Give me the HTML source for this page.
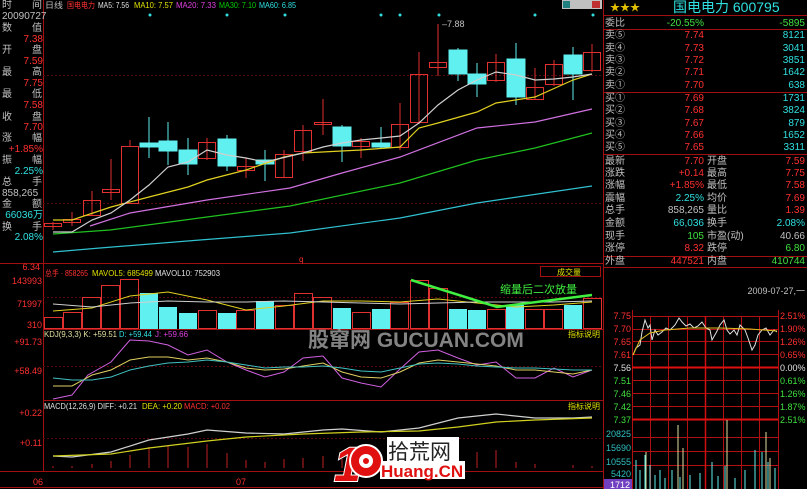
<!DOCTYPE html>
<html><head><meta charset="utf-8"><style>
html,body{margin:0;padding:0;background:#000;overflow:hidden}
svg{display:block}
text{font-family:"Liberation Sans","Noto Sans CJK SC",sans-serif}
</style></head><body>
<svg width="807" height="489" viewBox="0 0 807 489" xmlns="http://www.w3.org/2000/svg">
<rect width="807" height="489" fill="#000"/>
<g stroke="#a01010" stroke-width="1" fill="none">
<line x1="43.5" y1="0" x2="43.5" y2="472"/>
<line x1="603.5" y1="0" x2="603.5" y2="489"/>
<line x1="0" y1="263.5" x2="603" y2="263.5"/>
<line x1="43" y1="329.5" x2="603" y2="329.5"/>
<line x1="43" y1="400.5" x2="603" y2="400.5"/>
<line x1="0" y1="471.5" x2="603" y2="471.5"/>
<line x1="0" y1="487.5" x2="603" y2="487.5"/>
<line x1="603" y1="29.5" x2="807" y2="29.5"/>
<line x1="603" y1="92.5" x2="807" y2="92.5"/>
<line x1="603" y1="154.5" x2="807" y2="154.5"/>
<line x1="603" y1="256.5" x2="807" y2="256.5"/>
<line x1="603" y1="267.5" x2="807" y2="267.5"/>
<line x1="603" y1="15.5" x2="807" y2="15.5"/>
</g>
<g stroke="#5a0808" stroke-dasharray="2,2">
<line x1="43" y1="75.5" x2="603" y2="75.5"/>
<line x1="43" y1="203.5" x2="603" y2="203.5"/>
<line x1="43" y1="297.5" x2="603" y2="297.5"/>
<line x1="43" y1="366.5" x2="603" y2="366.5"/>
<line x1="43" y1="438.5" x2="603" y2="438.5"/>
</g>
<g font-size="10" fill="#c0c0c0">
<text x="2" y="8">时</text><text x="32" y="8">间</text>
<text x="2" y="19">20090727</text>
<text x="2" y="31">数</text><text x="32" y="31">值</text>
<text x="2" y="53">开</text><text x="32" y="53">盘</text>
<text x="2" y="75">最</text><text x="32" y="75">高</text>
<text x="2" y="97">最</text><text x="32" y="97">低</text>
<text x="2" y="120">收</text><text x="32" y="120">盘</text>
<text x="2" y="141">涨</text><text x="32" y="141">幅</text>
<text x="2" y="163">振</text><text x="32" y="163">幅</text>
<text x="2" y="185">总</text><text x="32" y="185">手</text>
<text x="2" y="196">858,265</text>
<text x="2" y="207">金</text><text x="32" y="207">额</text>
<text x="2" y="230">换</text><text x="32" y="230">手</text>
</g>
<g font-size="10" text-anchor="end">
<text x="43" y="42" fill="#ff3030">7.38</text>
<text x="43" y="64" fill="#ff3030">7.59</text>
<text x="43" y="86" fill="#ff3030">7.75</text>
<text x="43" y="108" fill="#ff3030">7.58</text>
<text x="43" y="130" fill="#ff3030">7.70</text>
<text x="43" y="152" fill="#ff3030">+1.85%</text>
<text x="43" y="174" fill="#30e0e0">2.25%</text>
<text x="43" y="218" fill="#30e0e0">66036万</text>
<text x="43" y="240" fill="#30e0e0">2.08%</text>
<text x="40" y="270" fill="#ff3030" font-size="9">6.34</text>
<text x="42" y="284" fill="#ff3030" font-size="9">143993</text>
<text x="42" y="307" fill="#ff3030" font-size="9">71997</text>
<text x="42" y="328" fill="#ff3030" font-size="9">310</text>
<text x="42" y="345" fill="#ff3030" font-size="9">+91.73</text>
<text x="42" y="374" fill="#ff3030" font-size="9">+58.49</text>
<text x="42" y="416" fill="#ff3030" font-size="9">+0.22</text>
<text x="42" y="446" fill="#ff3030" font-size="9">+0.11</text>
</g>
<text x="33" y="485" fill="#ff3030" font-size="9">06</text>
<text x="236" y="485" fill="#ff3030" font-size="9">07</text>
<g font-size="8">
<text x="45" y="8" fill="#c0c0c0" textLength="18" lengthAdjust="spacingAndGlyphs">日线</text>
<text x="67" y="8" fill="#ff3030" textLength="28" lengthAdjust="spacingAndGlyphs">国电电力</text>
<text x="98" y="8" fill="#e0e0e0" textLength="31" lengthAdjust="spacingAndGlyphs">MA5: 7.56</text>
<text x="134" y="8" fill="#e0e000" textLength="39" lengthAdjust="spacingAndGlyphs">MA10: 7.57</text>
<text x="176" y="8" fill="#e040e0" textLength="40" lengthAdjust="spacingAndGlyphs">MA20: 7.33</text>
<text x="219" y="8" fill="#00d000" textLength="37" lengthAdjust="spacingAndGlyphs">MA30: 7.10</text>
<text x="259" y="8" fill="#30e0e0" textLength="37" lengthAdjust="spacingAndGlyphs">MA60: 6.85</text>
</g>
<g fill="#30e0e0">
<circle cx="150" cy="15" r="1.5"/><circle cx="227" cy="15" r="1.5"/><circle cx="285" cy="15" r="1.5"/><circle cx="381" cy="15" r="1.5"/><circle cx="400" cy="15" r="1.5"/><circle cx="439" cy="15" r="1.5"/><circle cx="535" cy="15" r="1.5"/><circle cx="593" cy="15" r="1.5"/>
</g>
<rect x="562" y="0" width="40" height="9" fill="#c0c0c0"/>
<rect x="563" y="1" width="7" height="7" fill="#208080"/>
<rect x="592" y="1" width="8" height="7" fill="#c03030"/>
<text x="442" y="27" fill="#c0c0c0" font-size="9">–7.88</text>
<g stroke="#e03030" stroke-width="1" fill="none">
<line x1="53" y1="222" x2="53" y2="230"/><rect x="44.5" y="223.5" width="17" height="3"/>
<line x1="72" y1="212" x2="72" y2="226"/><rect x="63.5" y="219.5" width="17" height="3"/>
<line x1="92" y1="191" x2="92" y2="215"/><rect x="83.5" y="200.5" width="17" height="15"/>
<line x1="111" y1="159" x2="111" y2="200"/><rect x="102.5" y="189.5" width="17" height="3"/>
<line x1="130" y1="140" x2="130" y2="146"/><rect x="121.5" y="146.5" width="17" height="57"/>
<line x1="207" y1="138" x2="207" y2="160"/><rect x="198.5" y="142.5" width="17" height="16"/>
<line x1="246" y1="158" x2="246" y2="178"/><rect x="237.5" y="166.5" width="17" height="4"/>
<line x1="284" y1="150" x2="284" y2="178"/><rect x="275.5" y="154.5" width="17" height="23"/>
<line x1="303" y1="125" x2="303" y2="161"/><rect x="294.5" y="130.5" width="17" height="21"/>
<line x1="323" y1="99" x2="323" y2="135"/><rect x="314.5" y="122.5" width="17" height="2"/>
<line x1="361" y1="138" x2="361" y2="158"/><rect x="352.5" y="141.5" width="17" height="5"/>
<line x1="400" y1="103" x2="400" y2="150"/><rect x="391.5" y="124.5" width="17" height="23"/>
<line x1="419" y1="52" x2="419" y2="124"/><rect x="410.5" y="74.5" width="17" height="48"/>
<line x1="438" y1="24" x2="438" y2="76"/><rect x="429.5" y="62.5" width="17" height="5"/>
<line x1="496" y1="54" x2="496" y2="82"/><rect x="487.5" y="62.5" width="17" height="18"/>
<line x1="535" y1="68" x2="535" y2="99"/><rect x="526.5" y="87.5" width="17" height="12"/>
<line x1="554" y1="60" x2="554" y2="86"/><rect x="545.5" y="64.5" width="17" height="20"/>
<line x1="592" y1="44" x2="592" y2="72"/><rect x="583.5" y="52.5" width="17" height="18"/>
</g>
<g stroke="#60f0f0" stroke-width="1" fill="#60f0f0">
<line x1="149" y1="117" x2="149" y2="158"/><rect x="140" y="143" width="18" height="4"/>
<line x1="168" y1="122" x2="168" y2="165"/><rect x="159" y="141" width="18" height="10"/>
<line x1="188" y1="138" x2="188" y2="175"/><rect x="179" y="150" width="18" height="14"/>
<line x1="227" y1="135" x2="227" y2="171"/><rect x="218" y="139" width="18" height="27"/>
<line x1="265" y1="150" x2="265" y2="181"/><rect x="256" y="160" width="18" height="4"/>
<line x1="342" y1="125" x2="342" y2="162"/><rect x="333" y="127" width="18" height="19"/>
<line x1="381" y1="127" x2="381" y2="148"/><rect x="372" y="143" width="18" height="4"/>
<line x1="458" y1="48" x2="458" y2="81"/><rect x="449" y="50" width="18" height="24"/>
<line x1="477" y1="63" x2="477" y2="97"/><rect x="468" y="74" width="18" height="10"/>
<line x1="516" y1="43" x2="516" y2="105"/><rect x="507" y="59" width="18" height="38"/>
<line x1="573" y1="47" x2="573" y2="100"/><rect x="564" y="55" width="18" height="19"/>
</g>
<g fill="none" stroke-width="1.2">
<polyline stroke="#30c0d0" points="53,252 100,248 200,240 290,233 400,218 477,203 592,186"/>
<polyline stroke="#20c020" points="53,234 110,230 207,217 290,206 400,183 477,160 535,148 592,133"/>
<polyline stroke="#d070e0" points="90,226 130,213 207,200 290,188 342,173 400,157 477,128 535,122 592,109"/>
<polyline stroke="#e0d020" points="53,220 72,220 111,207 149,197 188,187 207,180 246,170 284,157 303,153 361,150 400,147 419,128 438,123 477,112 496,103 535,97 573,80 592,74"/>
<polyline stroke="#d0d0d0" points="53,232 72,232 92,220 111,213 130,200 149,185 168,167 188,162 207,150 227,155 246,158 265,162 303,153 323,147 342,143 361,140 381,138 400,136 419,123 438,105 458,90 477,80 496,72 516,75 535,80 554,79 573,77 592,74"/>
</g>
<text x="299" y="262" fill="#ff3030" font-size="8">q</text>
<g font-size="8">
<text x="45" y="276" fill="#ff3030" textLength="43" lengthAdjust="spacingAndGlyphs">总手 · 858265</text>
<text x="92" y="276" fill="#e0e000" textLength="61" lengthAdjust="spacingAndGlyphs">MAVOL5: 685499</text>
<text x="155" y="276" fill="#e0e0e0" textLength="65" lengthAdjust="spacingAndGlyphs">MAVOL10: 752903</text>
</g>
<rect x="540.5" y="266.5" width="60" height="10" fill="none" stroke="#a01010"/>
<text x="557" y="275" fill="#e0e000" font-size="8">成交量</text>
<g stroke="#e03030" fill="none">
<rect x="44.5" y="317.5" width="18" height="11"/><rect x="63.5" y="312.5" width="18" height="16"/>
<rect x="82.5" y="297.5" width="18" height="31"/><rect x="101.5" y="285.5" width="18" height="43"/>
<rect x="120.5" y="279.5" width="18" height="49"/><rect x="198.5" y="310.5" width="18" height="18"/>
<rect x="236.5" y="310.5" width="18" height="18"/><rect x="275.5" y="305.5" width="18" height="23"/>
<rect x="294.5" y="293.5" width="18" height="35"/><rect x="313.5" y="297.5" width="18" height="31"/>
<rect x="352.5" y="312.5" width="18" height="16"/><rect x="390.5" y="302.5" width="18" height="26"/>
<rect x="410.5" y="280.5" width="18" height="48"/><rect x="429.5" y="288.5" width="18" height="40"/>
<rect x="487.5" y="309.5" width="18" height="19"/><rect x="525.5" y="309.5" width="18" height="19"/>
<rect x="544.5" y="309.5" width="18" height="19"/><rect x="583.5" y="298.5" width="18" height="30"/>
</g>
<g fill="#60f0f0">
<rect x="140" y="293" width="18" height="36"/><rect x="159" y="307" width="18" height="22"/>
<rect x="179" y="313" width="18" height="16"/><rect x="218" y="313" width="18" height="16"/>
<rect x="256" y="301" width="18" height="28"/><rect x="333" y="308" width="18" height="21"/>
<rect x="372" y="309" width="18" height="20"/><rect x="449" y="309" width="18" height="20"/>
<rect x="468" y="310" width="18" height="19"/><rect x="506" y="305" width="18" height="24"/>
<rect x="564" y="305" width="18" height="24"/>
</g>
<g fill="none" stroke-width="1">
<polyline stroke="#e0d020" points="53,311 92,308 130,296 168,292 207,300 246,310 284,306 323,301 361,301 400,302 438,299 477,303 516,307 554,305 592,302"/>
<polyline stroke="#d0d0d0" points="53,304 92,307 130,303 168,301 207,302 246,302 284,301 323,302 361,303 400,304 438,303 477,302 516,302 554,302 592,301"/>
</g>
<polyline fill="none" stroke="#40f040" stroke-width="2.5" points="411,280 497,307 592,295"/>
<text x="500" y="293" fill="#40f040" font-size="11">缩量后二次放量</text>
<g font-size="8">
<text x="44" y="337" fill="#e0e0a0" textLength="73" lengthAdjust="spacingAndGlyphs">KDJ(9,3,3) K: +59.51</text>
<text x="119" y="337" fill="#30e0e0" textLength="33" lengthAdjust="spacingAndGlyphs">D: +59.44</text>
<text x="155" y="337" fill="#e040e0" textLength="33" lengthAdjust="spacingAndGlyphs">J: +59.66</text>
</g>
<text x="568" y="337" fill="#e0e000" font-size="8">指标说明</text>
<g fill="none" stroke-width="1">
<polyline stroke="#d060e0" points="53,399 72,395 88,375 111,362 130,340 149,341 168,345 188,355 207,350 227,362 246,370 265,377 284,372 303,358 323,356 342,378 361,383 381,387 400,369 410,360 419,352 438,350 458,358 477,365 496,362 516,378 535,378 554,368 573,377 592,370"/>
<polyline stroke="#e0d060" points="53,386 72,386 92,375 111,370 130,360 149,357 168,357 188,360 207,358 227,362 246,368 265,370 284,369 303,366 323,363 342,372 361,377 381,378 400,372 419,363 438,360 458,362 477,364 496,366 516,370 535,370 554,372 573,374 592,370"/>
<polyline stroke="#40c0c0" points="53,378 72,380 92,380 111,377 130,370 149,366 168,363 188,362 207,360 227,362 246,365 265,368 284,367 303,367 323,366 342,368 361,371 381,372 400,368 419,364 438,363 458,364 477,366 496,367 516,368 535,368 554,369 573,370 592,370"/>
</g>
<g font-size="8">
<text x="44" y="409" fill="#e0e0e0" textLength="93" lengthAdjust="spacingAndGlyphs">MACD(12,26,9) DIFF: +0.21</text>
<text x="142" y="409" fill="#e0e000" textLength="40" lengthAdjust="spacingAndGlyphs">DEA: +0.20</text>
<text x="184" y="409" fill="#ff3030" textLength="46" lengthAdjust="spacingAndGlyphs">MACD: +0.02</text>
</g>
<text x="568" y="409" fill="#e0e000" font-size="8">指标说明</text>
<g stroke="#c02020">
<line x1="53" y1="468" x2="53" y2="466"/><line x1="72" y1="468" x2="72" y2="466"/><line x1="92" y1="468" x2="92" y2="464"/><line x1="111" y1="468" x2="111" y2="461"/><line x1="130" y1="468" x2="130" y2="455"/><line x1="149" y1="468" x2="149" y2="447"/><line x1="168" y1="468" x2="168" y2="446"/><line x1="188" y1="468" x2="188" y2="447"/><line x1="207" y1="468" x2="207" y2="444"/><line x1="227" y1="468" x2="227" y2="453"/><line x1="246" y1="468" x2="246" y2="460"/><line x1="265" y1="468" x2="265" y2="462"/><line x1="284" y1="468" x2="284" y2="459"/><line x1="303" y1="468" x2="303" y2="458"/><line x1="323" y1="468" x2="323" y2="456"/><line x1="342" y1="468" x2="342" y2="459"/><line x1="361" y1="468" x2="361" y2="462"/><line x1="381" y1="468" x2="381" y2="463"/><line x1="400" y1="468" x2="400" y2="460"/><line x1="477" y1="468" x2="477" y2="452"/><line x1="496" y1="468" x2="496" y2="450"/><line x1="516" y1="468" x2="516" y2="462"/><line x1="535" y1="468" x2="535" y2="464"/><line x1="573" y1="468" x2="573" y2="465"/><line x1="592" y1="468" x2="592" y2="466"/>
</g>
<g fill="none" stroke-width="1.2">
<polyline stroke="#d0d0d0" points="53,456 72,457 111,452 149,440 188,434 207,430 246,433 284,434 323,430 342,429 381,432 419,428 458,418 496,414 535,418 573,418 592,417"/>
<polyline stroke="#d0d020" points="53,456 111,454 149,448 207,441 246,437 303,434 361,432 419,431 458,427 496,422 535,420 592,418"/>
</g>
<text x="308" y="347" fill="#9a9a9a" font-size="21" font-weight="bold" opacity="0.85">股窜网 GUCUAN.COM</text>
<!-- logo -->
<rect x="387" y="437" width="72" height="24" fill="#fff"/>
<rect x="380" y="461" width="85" height="18" fill="#fff"/>
<text x="334" y="481" fill="#e01010" stroke="#fff" stroke-width="2" paint-order="stroke" font-size="48" font-weight="bold" font-style="italic">1</text>
<circle cx="366" cy="461" r="16" fill="#e01010" stroke="#fff" stroke-width="2"/>
<circle cx="366" cy="461" r="7" fill="#fff"/><circle cx="366" cy="461" r="3" fill="#e01010"/>
<text x="388" y="459" fill="#222" font-size="21">拾荒网</text>
<text x="381" y="477" fill="#e01010" font-size="17" font-weight="bold">Huang.CN</text>
<!-- right panel -->
<text x="610" y="11" fill="#e0c000" font-size="10">★★★</text>
<text x="673" y="12" fill="#30e0e0" font-size="14">国电电力 600795</text>
<g font-size="10" fill="#c0c0c0">
<text x="605" y="26">委比</text>
<text x="605" y="38">卖⑤</text><text x="605" y="51">卖④</text><text x="605" y="63">卖③</text><text x="605" y="75">卖②</text><text x="605" y="88">卖①</text>
<text x="605" y="101">买①</text><text x="605" y="113">买②</text><text x="605" y="126">买③</text><text x="605" y="138">买④</text><text x="605" y="150">买⑤</text>
<text x="605" y="164">最新</text><text x="605" y="176">涨跌</text><text x="605" y="188">涨幅</text><text x="605" y="201">震幅</text><text x="605" y="213">总手</text><text x="605" y="226">金额</text><text x="605" y="239">现手</text><text x="605" y="251">涨停</text><text x="605" y="264">外盘</text>
<text x="707" y="164">开盘</text><text x="707" y="176">最高</text><text x="707" y="188">最低</text><text x="707" y="201">均价</text><text x="707" y="213">量比</text><text x="707" y="226">换手</text><text x="707" y="239">市盈(动)</text><text x="707" y="251">跌停</text><text x="707" y="264">内盘</text>
</g>
<g font-size="10" text-anchor="end">
<text x="704" y="26" fill="#40e040">-20.55%</text><text x="805" y="26" fill="#40e040">-5895</text>
<g fill="#ff3030"><text x="704" y="38">7.74</text><text x="704" y="51">7.73</text><text x="704" y="63">7.72</text><text x="704" y="75">7.71</text><text x="704" y="88">7.70</text><text x="704" y="101">7.69</text><text x="704" y="113">7.68</text><text x="704" y="126">7.67</text><text x="704" y="138">7.66</text><text x="704" y="150">7.65</text>
<text x="704" y="164">7.70</text><text x="704" y="176">+0.14</text><text x="704" y="188">+1.85%</text><text x="704" y="251">8.32</text><text x="704" y="264">447521</text>
<text x="805" y="164">7.59</text><text x="805" y="176">7.75</text><text x="805" y="188">7.58</text><text x="805" y="201">7.69</text><text x="805" y="213">1.39</text></g>
<g fill="#30e0e0"><text x="805" y="38">8121</text><text x="805" y="51">3041</text><text x="805" y="63">3851</text><text x="805" y="75">1642</text><text x="805" y="88">638</text><text x="805" y="101">1731</text><text x="805" y="113">3824</text><text x="805" y="126">879</text><text x="805" y="138">1652</text><text x="805" y="150">3311</text>
<text x="704" y="201">2.25%</text><text x="704" y="226">66,036</text><text x="805" y="226">2.08%</text></g>
<text x="704" y="213" fill="#c0c0c0">858,265</text>
<text x="704" y="239" fill="#40e040">105</text>
<text x="805" y="239" fill="#c0c0c0">40.66</text>
<text x="805" y="251" fill="#40e040">6.80</text>
<text x="805" y="264" fill="#40e040">410744</text>
</g>
<text x="805" y="294" fill="#c0c0c0" font-size="9" text-anchor="end">2009-07-27,一</text>
<g stroke="#b01010" stroke-width="1">
<line x1="632" y1="316.5" x2="778" y2="316.5"/><line x1="632" y1="329.5" x2="778" y2="329.5"/><line x1="632" y1="341.5" x2="778" y2="341.5"/><line x1="632" y1="354.5" x2="778" y2="354.5"/>
<line x1="632" y1="380.5" x2="778" y2="380.5"/><line x1="632" y1="393.5" x2="778" y2="393.5"/><line x1="632" y1="406.5" x2="778" y2="406.5"/>
<line x1="632" y1="437.5" x2="778" y2="437.5"/><line x1="632" y1="451.5" x2="778" y2="451.5"/><line x1="632" y1="465.5" x2="778" y2="465.5"/>
<line x1="632.5" y1="310" x2="632.5" y2="489"/><line x1="778.5" y1="310" x2="778.5" y2="489"/>
<line x1="650.5" y1="316" x2="650.5" y2="489"/><line x1="668.5" y1="316" x2="668.5" y2="489"/><line x1="687.5" y1="316" x2="687.5" y2="489"/><line x1="723.5" y1="316" x2="723.5" y2="489"/><line x1="741.5" y1="316" x2="741.5" y2="489"/><line x1="759.5" y1="316" x2="759.5" y2="489"/>
</g>
<line x1="705.5" y1="316" x2="705.5" y2="489" stroke="#d01010" stroke-width="1.5"/>
<line x1="632" y1="367.5" x2="778" y2="367.5" stroke="#e01010" stroke-width="2"/>
<line x1="632" y1="419.5" x2="778" y2="419.5" stroke="#e01010" stroke-width="2"/>
<g font-size="9" text-anchor="end">
<text x="631" y="319" fill="#ff3030">7.75</text><text x="631" y="332" fill="#ff3030">7.70</text><text x="631" y="345" fill="#ff3030">7.65</text><text x="631" y="358" fill="#ff3030">7.61</text>
<text x="631" y="371" fill="#e0e0e0">7.56</text>
<text x="631" y="384" fill="#40e040">7.51</text><text x="631" y="397" fill="#40e040">7.46</text><text x="631" y="410" fill="#40e040">7.42</text><text x="631" y="423" fill="#40e040">7.37</text>
<text x="631" y="437" fill="#30c0c0">20825</text><text x="631" y="451" fill="#30c0c0">15690</text><text x="631" y="465" fill="#30c0c0">10555</text><text x="631" y="477" fill="#30c0c0">5420</text>
</g>
<rect x="604" y="479" width="28" height="10" fill="#7040c0"/>
<text x="610" y="488" fill="#fff" font-size="9">1712</text>
<g font-size="9">
<text x="780" y="319" fill="#ff3030">2.51%</text><text x="780" y="332" fill="#ff3030">1.90%</text><text x="780" y="345" fill="#ff3030">1.26%</text><text x="780" y="358" fill="#ff3030">0.65%</text>
<text x="780" y="371" fill="#e0e0e0">0.00%</text>
<text x="780" y="384" fill="#40e040">0.61%</text><text x="780" y="397" fill="#40e040">1.26%</text><text x="780" y="410" fill="#40e040">1.87%</text><text x="780" y="423" fill="#40e040">2.51%</text>
</g>
<polyline fill="none" stroke="#e0e0e0" stroke-width="1" points="633,355 636,348 640,345 642,332 645,320 648,328 650,325 652,340 655,330 658,335 662,332 666,328 670,330 675,325 679,318 682,322 686,326 690,324 694,328 698,326 702,322 706,328 710,330 712,340 716,333 720,325 724,320 727,330 730,334 734,330 737,335 740,325 745,330 748,338 752,350 755,345 758,335 762,330 766,328 770,335 774,330 777,332"/>
<polyline fill="none" stroke="#e0c020" stroke-width="1" points="633,355 640,340 650,333 665,330 690,328 720,328 750,329 777,331"/>
<g stroke="#60f0f0" stroke-width="1">
<line x1="636" y1="489" x2="636" y2="460"/><line x1="640" y1="489" x2="640" y2="470"/><line x1="645" y1="489" x2="645" y2="455"/><line x1="650" y1="489" x2="650" y2="465"/><line x1="655" y1="489" x2="655" y2="475"/><line x1="660" y1="489" x2="660" y2="470"/><line x1="665" y1="489" x2="665" y2="478"/><line x1="672" y1="489" x2="672" y2="470"/><line x1="680" y1="489" x2="680" y2="477"/><line x1="690" y1="489" x2="690" y2="475"/><line x1="700" y1="489" x2="700" y2="473"/><line x1="712" y1="489" x2="712" y2="462"/><line x1="718" y1="489" x2="718" y2="476"/><line x1="725" y1="489" x2="725" y2="466"/><line x1="735" y1="489" x2="735" y2="478"/><line x1="745" y1="489" x2="745" y2="470"/><line x1="755" y1="489" x2="755" y2="450"/><line x1="762" y1="489" x2="762" y2="452"/><line x1="768" y1="489" x2="768" y2="462"/><line x1="775" y1="489" x2="775" y2="468"/>
</g>
<g stroke="#e0e0a0" stroke-width="1">
<line x1="646" y1="489" x2="646" y2="452"/><line x1="678" y1="489" x2="678" y2="425"/><line x1="683" y1="489" x2="683" y2="448"/><line x1="727" y1="489" x2="727" y2="420"/><line x1="766" y1="489" x2="766" y2="432"/><line x1="770" y1="489" x2="770" y2="458"/>
</g>
</svg>
</body></html>
